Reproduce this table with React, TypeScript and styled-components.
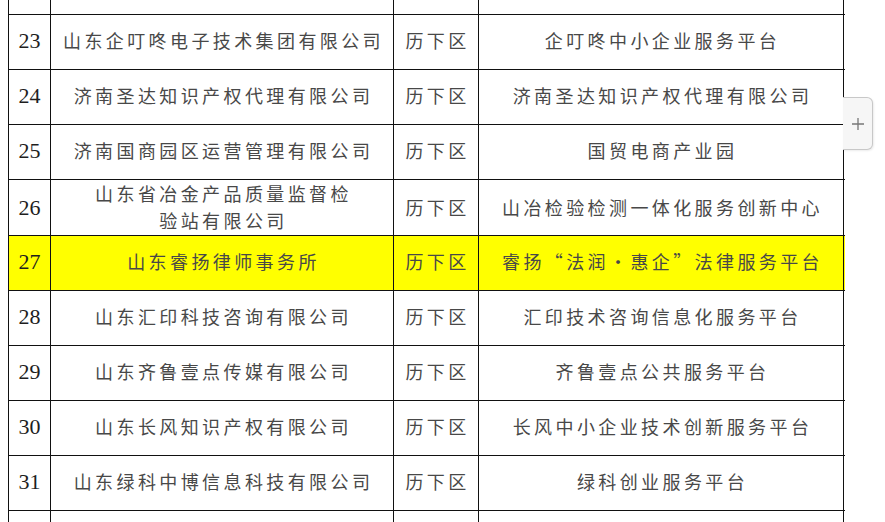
import React from "react";
import styled, { createGlobalStyle } from "styled-components";

const Global = createGlobalStyle`
  html, body { margin: 0; padding: 0; background: #ffffff; overflow: hidden; }
  body { width: 885px; height: 522px; position: relative; }
`;

const Sheet = styled.div`
  margin-left: 8px;
  width: 836px;
  border-left: 1px solid #111;
`;

const Row = styled.div<{ $h: number; $hl?: boolean; $open?: boolean }>`
  display: grid;
  grid-template-columns: 42px 343px 85px 365px;
  height: ${(p) => p.$h}px;
  box-sizing: border-box;
  border-bottom: ${(p) => (p.$open ? "none" : "1px solid #111")};
  background: ${(p) => (p.$hl ? "#ffff00" : "#ffffff")};
`;

const Cell = styled.div`
  box-sizing: border-box;
  border-right: 1px solid #111;
  display: flex;
  align-items: center;
  justify-content: center;
  text-align: center;
  font-family: "Noto Sans CJK SC", sans-serif;
  font-size: 18px;
  letter-spacing: 3.4px;
  line-height: 27px;
  color: #484848;
  padding: 0 0 3px 3px;
`;

const NumCell = styled(Cell)`
  font-family: "Liberation Serif", "Times New Roman", serif;
  font-size: 22px;
  letter-spacing: 0;
  color: #1e1e1e;
  padding: 0 0 3px 0;
`;

const AddTab = styled.button`
  position: absolute;
  left: 843px;
  top: 97px;
  width: 30px;
  height: 53px;
  box-sizing: border-box;
  border: 1px solid #c8c8c8;
  border-left: none;
  border-radius: 0 6px 6px 0;
  background: #f6f6f6;
  box-shadow: 1px 1px 2px rgba(0, 0, 0, 0.08);
  display: flex;
  align-items: center;
  justify-content: center;
  padding: 0;
  cursor: pointer;
`;

type R = { n: number; company: React.ReactNode; area: string; platform: string; h?: number; hl?: boolean };

const rows: R[] = [
  { n: 23, company: "山东企叮咚电子技术集团有限公司", area: "历下区", platform: "企叮咚中小企业服务平台" },
  { n: 24, company: "济南圣达知识产权代理有限公司", area: "历下区", platform: "济南圣达知识产权代理有限公司" },
  { n: 25, company: "济南国商园区运营管理有限公司", area: "历下区", platform: "国贸电商产业园" },
  {
    n: 26,
    company: (
      <>
        山东省冶金产品质量监督检
        <br />
        验站有限公司
      </>
    ),
    area: "历下区",
    platform: "山冶检验检测一体化服务创新中心",
    h: 56,
  },
  { n: 27, company: "山东睿扬律师事务所", area: "历下区", platform: "睿扬“法润•惠企”法律服务平台", hl: true },
  { n: 28, company: "山东汇印科技咨询有限公司", area: "历下区", platform: "汇印技术咨询信息化服务平台" },
  { n: 29, company: "山东齐鲁壹点传媒有限公司", area: "历下区", platform: "齐鲁壹点公共服务平台" },
  { n: 30, company: "山东长风知识产权有限公司", area: "历下区", platform: "长风中小企业技术创新服务平台" },
  { n: 31, company: "山东绿科中博信息科技有限公司", area: "历下区", platform: "绿科创业服务平台" },
];

export default function App() {
  return (
    <>
      <Global />
      <Sheet>
        <Row $h={15}>
          <Cell />
          <Cell />
          <Cell />
          <Cell />
        </Row>
        {rows.map((r) => (
          <Row key={r.n} $h={r.h ?? 55} $hl={r.hl}>
            <NumCell>{r.n}</NumCell>
            <Cell>{r.company}</Cell>
            <Cell>{r.area}</Cell>
            <Cell>{r.platform}</Cell>
          </Row>
        ))}
        <Row $h={11} $open>
          <Cell />
          <Cell />
          <Cell />
          <Cell />
        </Row>
      </Sheet>
      <AddTab aria-label="add">
        <svg width="14" height="14" viewBox="0 0 14 14">
          <path d="M7 1v12M1 7h12" stroke="#777" strokeWidth="1.3" fill="none" />
        </svg>
      </AddTab>
    </>
  );
}
